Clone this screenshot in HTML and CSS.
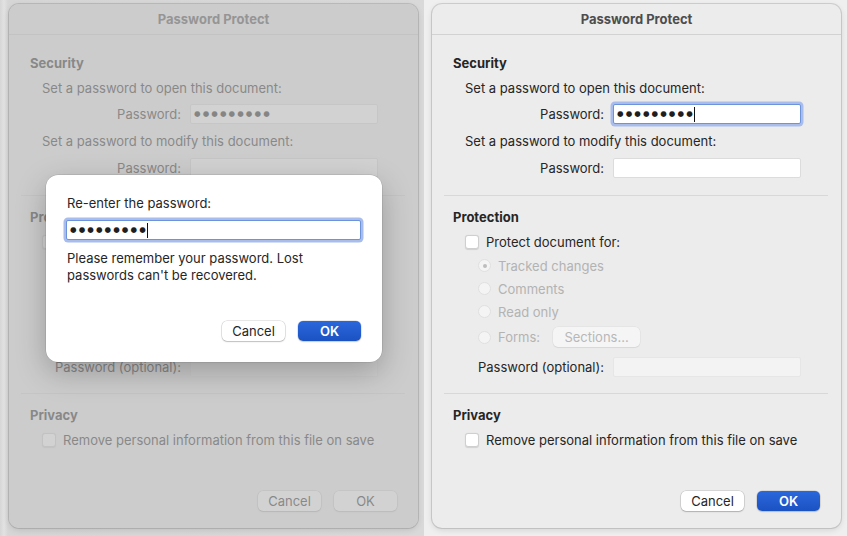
FILE: index.html
```html
<!DOCTYPE html>
<html lang="en">
<head>
<meta charset="utf-8">
<title>Password Protect</title>
<link rel="stylesheet" href="styles.css">
</head>
<body>
<div class="page">
  <div class="panel panel-left">
    <div class="dialog">
      <div class="titlebar">Password Protect</div>
      <div class="section sec-security">
        <div class="heading">Security</div>
        <div class="line">Set a password to open this document:</div>
        <div class="field-row"><span class="field-label">Password:</span><span class="input"><span class="dots">●●●●●●●●●</span></span></div>
        <div class="line line-2">Set a password to modify this document:</div>
        <div class="field-row"><span class="field-label">Password:</span><span class="input"></span></div>
      </div>
      <div class="sep"></div>
      <div class="section sec-protection">
        <div class="heading">Protection</div>
        <div class="check-row"><span class="checkbox"></span><span class="covered">Protect document for:</span></div>
        <div class="radio-row disabled"><span class="radio on"></span><span class="covered">Tracked changes</span></div>
        <div class="radio-row disabled"><span class="radio"></span><span class="covered">Comments</span></div>
        <div class="radio-row disabled"><span class="radio"></span><span class="covered">Read only</span></div>
        <div class="radio-row forms-row disabled"><span class="radio"></span><span class="covered">Forms:</span><span class="btn-sections covered">Sections...</span></div>
        <div class="field-row opt-row"><span class="field-label">Password (optional):</span><span class="input input-disabled"></span></div>
      </div>
      <div class="sep"></div>
      <div class="section sec-privacy">
        <div class="heading">Privacy</div>
        <div class="check-row"><span class="checkbox"></span><span>Remove personal information from this file on save</span></div>
      </div>
      <div class="footer">
        <span class="btn btn-cancel">Cancel</span>
        <span class="btn btn-ok btn-ok-inactive">OK</span>
      </div>
      <div class="dim"></div>
    </div>
    <div class="sheet">
      <div class="sheet-title">Re-enter the password:</div>
      <span class="input input-wide focused"><span class="dots">●●●●●●●●●</span><span class="caret"></span></span>
      <div class="sheet-note">Please remember your password. Lost<br>passwords can't be recovered.</div>
      <div class="sheet-footer">
        <span class="btn btn-cancel">Cancel</span>
        <span class="btn btn-ok">OK</span>
      </div>
    </div>
  </div>
  <div class="panel panel-right">
    <div class="dialog">
      <div class="titlebar">Password Protect</div>
      <div class="section sec-security">
        <div class="heading">Security</div>
        <div class="line">Set a password to open this document:</div>
        <div class="field-row"><span class="field-label">Password:</span><span class="input focused"><span class="dots">●●●●●●●●●</span><span class="caret"></span></span></div>
        <div class="line line-2">Set a password to modify this document:</div>
        <div class="field-row"><span class="field-label">Password:</span><span class="input"></span></div>
      </div>
      <div class="sep"></div>
      <div class="section sec-protection">
        <div class="heading">Protection</div>
        <div class="check-row"><span class="checkbox"></span><span>Protect document for:</span></div>
        <div class="radio-row disabled"><span class="radio on"></span><span>Tracked changes</span></div>
        <div class="radio-row disabled"><span class="radio"></span><span>Comments</span></div>
        <div class="radio-row disabled"><span class="radio"></span><span>Read only</span></div>
        <div class="radio-row forms-row disabled"><span class="radio"></span><span>Forms:</span><span class="btn-sections">Sections...</span></div>
        <div class="field-row opt-row"><span class="field-label">Password (optional):</span><span class="input input-disabled"></span></div>
      </div>
      <div class="sep"></div>
      <div class="section sec-privacy">
        <div class="heading">Privacy</div>
        <div class="check-row"><span class="checkbox"></span><span>Remove personal information from this file on save</span></div>
      </div>
      <div class="footer">
        <span class="btn btn-cancel">Cancel</span>
        <span class="btn btn-ok">OK</span>
      </div>
    </div>
  </div>
</div>
</body>
</html>
```

FILE: styles.css
```css
* { box-sizing: border-box; }
html, body { margin: 0; padding: 0; }
body {
  width: 847px;
  height: 536px;
  overflow: hidden;
  font-family: Inter, "Noto Sans", "Liberation Sans", sans-serif;
  font-size: 13px;
  color: #262626;
  background: #ededed;
}
.page {
  display: flex;
  width: 847px;
  height: 536px;
}
.panel {
  position: relative;
  height: 536px;
}
.panel-left {
  width: 424px;
  padding: 4px 6px 0 9px;
  background: linear-gradient(to right, #d6d6d6 0, #e2e2e2 4px, #d6d6d6 8px, #d9d9d9 100%);
}
.panel-right {
  width: 423px;
  padding: 4px 6px 0 8px;
  background: #efefef;
}
.dialog {
  position: relative;
  width: 409px;
  height: 524px;
  background: #ececec;
  border-radius: 10px;
  box-shadow: 0 0 0 1px rgba(0,0,0,0.12), 0 2px 6px rgba(0,0,0,0.12);
  display: flex;
  flex-direction: column;
}
.titlebar {
  height: 31px;
  border-bottom: 1px solid #d2d2d2;
  text-align: center;
  line-height: 30px;
  font-weight: 700;
  color: #4d4d4d;
  flex: none;
}
.section {
  padding-left: 21px;
  flex: none;
}
.sec-security { padding-top: 16px; padding-bottom: 14px; }
.sec-protection { padding-top: 9px; padding-bottom: 12px; }
.sec-privacy { padding-top: 9px; }
.heading {
  height: 24px;
  line-height: 24px;
  font-weight: 700;
}
.line {
  height: 26px;
  line-height: 26px;
  margin-left: 12px;
}
.line-2 { height: 28px; line-height: 28px; }
.field-row {
  display: flex;
  align-items: center;
  height: 26px;
}
.opt-row { height: 30px; padding-top: 1px; }
.field-label {
  width: 151px;
  text-align: right;
  margin-right: 9px;
  flex: none;
}
.input {
  display: flex;
  align-items: center;
  width: 188px;
  height: 20px;
  background: #ffffff;
  border: 1px solid #dcdcdc;
  border-radius: 2px;
  padding-left: 3px;
  flex: none;
}
.input-disabled {
  background: #f3f3f3;
  border-color: #e6e6e6;
}
.focused {
  border-color: #6d93dc;
  box-shadow: 0 0 0 2.5px #a8bdec;
}
.dots {
  font-family: "DejaVu Sans", sans-serif;
  font-size: 7.5px;
  letter-spacing: 2.1px;
  color: #1e1e1e;
  line-height: 18px;
}
.caret {
  display: inline-block;
  width: 1px;
  height: 15px;
  background: #111;
  margin-left: -1px;
}
.check-row {
  display: flex;
  align-items: center;
  height: 25px;
  margin-left: 12px;
}
.checkbox {
  width: 14px;
  height: 14px;
  background: #fff;
  border: 1px solid #cfcfcf;
  border-radius: 3px;
  box-shadow: 0 0.5px 1px rgba(0,0,0,0.12);
  margin-right: 7px;
  flex: none;
}
.radio-row {
  display: flex;
  align-items: center;
  height: 23px;
  margin-left: 25px;
}
.disabled { color: #b3b3b3; }
.radio {
  position: relative;
  width: 13px;
  height: 13px;
  border-radius: 50%;
  background: #f4f4f4;
  border: 1px solid #e0e0e0;
  margin-right: 7px;
  flex: none;
}
.radio.on::after {
  content: "";
  position: absolute;
  left: 3.5px;
  top: 3.5px;
  width: 4px;
  height: 4px;
  border-radius: 50%;
  background: #bdbdbd;
}
.forms-row { height: 28px; }
.btn-sections {
  display: inline-flex;
  align-items: center;
  justify-content: center;
  width: 87px;
  height: 20px;
  margin-left: 13px;
  background: #f5f5f5;
  border-radius: 5px;
  box-shadow: 0 0 0 0.5px rgba(0,0,0,0.06), 0 1px 1px rgba(0,0,0,0.06);
  color: #b8b8b8;
}
.covered { visibility: hidden; }
.sep {
  height: 1px;
  background: #d8d8d8;
  margin: 0 13px 0 12px;
  flex: none;
}
.footer {
  margin-top: auto;
  display: flex;
  justify-content: flex-end;
  gap: 13px;
  padding: 0 21px 17px 0;
}
.btn {
  display: inline-flex;
  align-items: center;
  justify-content: center;
  width: 63px;
  height: 20px;
  border-radius: 5px;
}
.btn-cancel {
  background: #ffffff;
  box-shadow: 0 0 0 0.5px rgba(0,0,0,0.18), 0 1px 1.5px rgba(0,0,0,0.18);
  color: #262626;
}
.btn-ok {
  background: linear-gradient(#2b67dc, #1b52c2);
  color: #ffffff;
  font-weight: 600;
  box-shadow: 0 0 0 0.5px rgba(0,0,0,0.15), 0 1px 1.5px rgba(0,0,0,0.15);
}
.btn-ok-inactive {
  background: #ffffff;
  color: #262626;
  font-weight: 400;
}
.dim {
  position: absolute;
  inset: 0;
  border-radius: 10px;
  background: rgba(186,186,186,0.66);
}
.sheet {
  position: absolute;
  left: 46px;
  top: 175px;
  width: 336px;
  height: 187px;
  background: #ffffff;
  border-radius: 12px;
  box-shadow: 0 0 0 0.5px rgba(0,0,0,0.15), 0 10px 30px rgba(0,0,0,0.25);
  padding: 20px 21px 21px 21px;
  display: flex;
  flex-direction: column;
}
.sheet-title {
  height: 16px;
  line-height: 16px;
}
.input-wide {
  width: 295px;
  margin: 9px 0 0 -1px;
}
.sheet-note {
  margin-top: 9.5px;
  line-height: 17px;
}
.sheet-footer {
  margin-top: auto;
  display: flex;
  justify-content: flex-end;
  gap: 13px;
}
```
